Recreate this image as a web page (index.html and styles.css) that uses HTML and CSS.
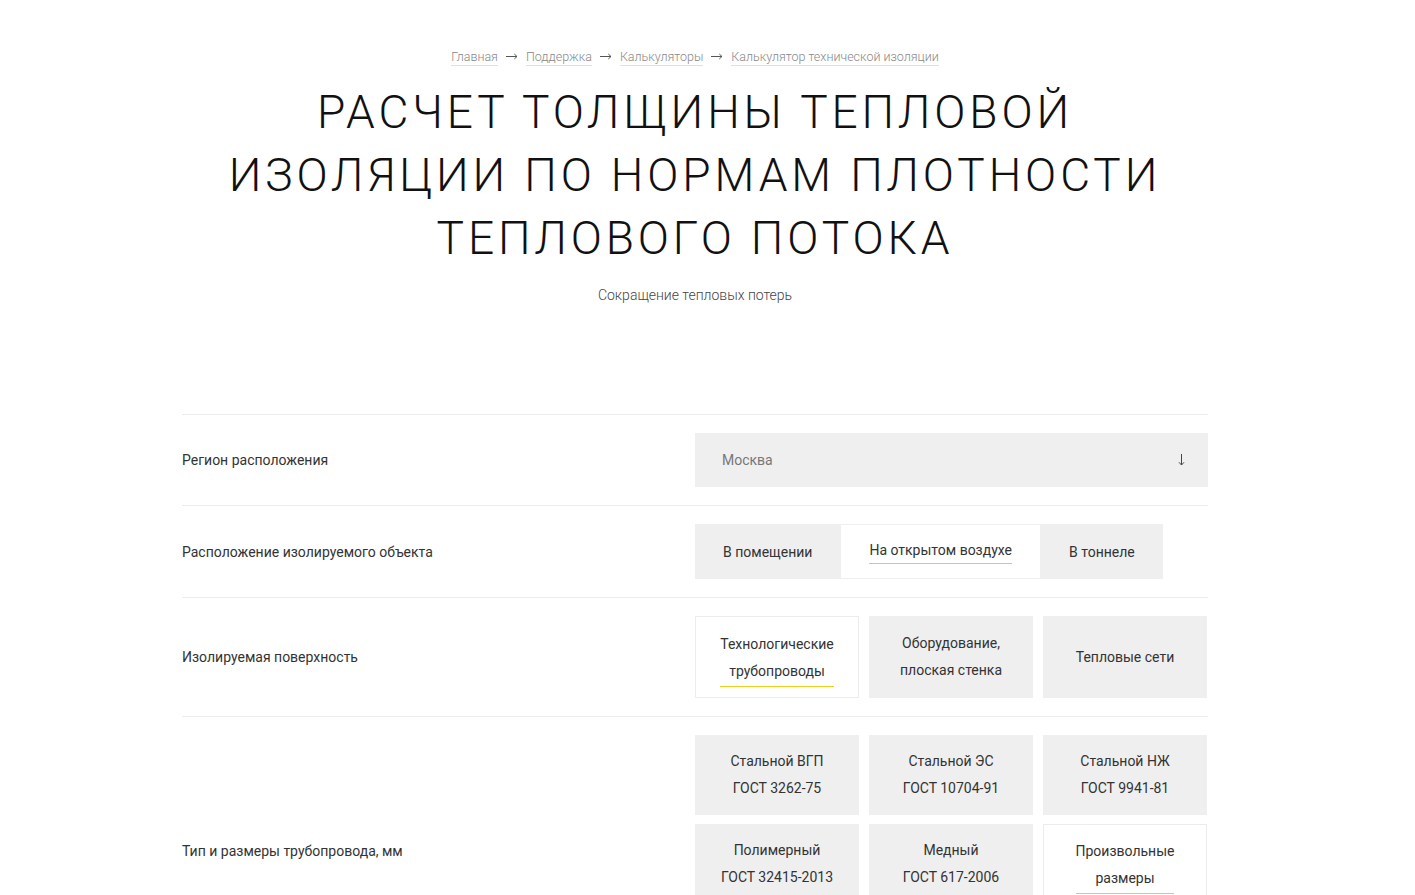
FILE: index.html
```html
<!DOCTYPE html>
<html lang="ru">
<head>
<meta charset="utf-8">
<title>Расчет толщины тепловой изоляции</title>
<link rel="stylesheet" href="styles.css">
</head>
<body>
<div class="page">
  <nav class="crumbs">
    <a href="#">Главная</a><svg class="arr" width="12" height="7" viewBox="0 0 12 7"><path d="M0 3.5H11M8.3 1L11 3.5L8.3 6" fill="none" stroke="#555" stroke-width="1"/></svg><a href="#">Поддержка</a><svg class="arr" width="12" height="7" viewBox="0 0 12 7"><path d="M0 3.5H11M8.3 1L11 3.5L8.3 6" fill="none" stroke="#555" stroke-width="1"/></svg><a href="#">Калькуляторы</a><svg class="arr" width="12" height="7" viewBox="0 0 12 7"><path d="M0 3.5H11M8.3 1L11 3.5L8.3 6" fill="none" stroke="#555" stroke-width="1"/></svg><a href="#">Калькулятор технической изоляции</a>
  </nav>
  <h1 class="title">Расчет толщины тепловой<br>изоляции по нормам плотности<br>теплового потока</h1>
  <p class="subtitle">Сокращение тепловых потерь</p>

  <div class="form">
    <div class="row">
      <div class="label">Регион расположения</div>
      <div class="ctrl">
        <div class="select"><span>Москва</span><svg class="down" width="7" height="12" viewBox="0 0 7 12"><path d="M3.5 0V11M1 8.3L3.5 11L6 8.3" fill="none" stroke="#444" stroke-width="1"/></svg></div>
      </div>
    </div>
    <div class="row">
      <div class="label">Расположение изолируемого объекта</div>
      <div class="ctrl">
        <div class="seg">
          <div class="segbtn">В помещении</div>
          <div class="segbtn active"><span class="ul">На открытом воздухе</span></div>
          <div class="segbtn">В тоннеле</div>
        </div>
      </div>
    </div>
    <div class="row">
      <div class="label">Изолируемая поверхность</div>
      <div class="ctrl">
        <div class="cards tall">
          <div class="card active"><span class="ul">Технологические<br>трубопроводы</span></div>
          <div class="card">Оборудование,<br>плоская стенка</div>
          <div class="card">Тепловые сети</div>
        </div>
      </div>
    </div>
    <div class="row">
      <div class="label">Тип и размеры трубопровода, мм</div>
      <div class="ctrl stack">
        <div class="cards">
          <div class="card">Стальной ВГП<br>ГОСТ 3262-75</div>
          <div class="card">Стальной ЭС<br>ГОСТ 10704-91</div>
          <div class="card">Стальной НЖ<br>ГОСТ 9941-81</div>
          <div class="card">Полимерный<br>ГОСТ 32415-2013</div>
          <div class="card">Медный<br>ГОСТ 617-2006</div>
          <div class="card active"><span class="ul">Произвольные<br>размеры</span></div>
        </div>
        <div class="field">Наружный диаметр, мм</div>
      </div>
    </div>
  </div>
</div>
</body>
</html>
```

FILE: styles.css
```css
html, body {
  margin: 0;
  padding: 0;
  background: #fff;
}
body {
  font-family: Roboto, "Liberation Sans", Arial, sans-serif;
  color: #222;
}
.page {
  width: 1390px;
  padding-top: 47px;
}
.crumbs {
  text-align: center;
  font-size: 12.5px;
  line-height: 20px;
  font-weight: 300;
}
.crumbs a {
  color: #888;
  text-decoration: none;
  border-bottom: 1px solid #f3e49a;
  padding-bottom: 1px;
}
.crumbs .arr {
  margin: 0 8px;
  vertical-align: 1px;
}
.title {
  margin: 14px 0 0;
  text-align: center;
  font-weight: 300;
  font-size: 46px;
  line-height: 63px;
  letter-spacing: 3.9px;
  text-transform: uppercase;
  color: #111;
}
.subtitle {
  margin: 15px 0 0;
  text-align: center;
  font-size: 14px;
  line-height: 20px;
  font-weight: 300;
  color: #444;
}
.form {
  width: 1026px;
  margin: 109px auto 0;
}
.row {
  display: grid;
  grid-template-columns: 513px 513px;
  align-items: center;
  border-top: 1px solid #ececec;
  padding: 18px 0;
}
.label {
  font-size: 14px;
  color: #333;
}
.select {
  display: flex;
  justify-content: space-between;
  align-items: center;
  height: 54px;
  padding: 0 23px 0 27px;
  background: #efefef;
  font-size: 14px;
  color: #777;
}
.seg {
  display: flex;
}
.segbtn {
  height: 55px;
  padding: 0 28px;
  display: flex;
  align-items: center;
  background: #efefef;
  font-size: 14px;
  color: #333;
}
.segbtn.active {
  background: #fff;
  border: 1px solid #efefef;
  box-sizing: border-box;
}
.segbtn .ul {
  display: inline-block;
  border-bottom: 1px solid #f0cf1c;
  padding: 0 0 5px;
  margin-top: 3px;
}
.stack {
  display: flex;
  flex-direction: column;
  gap: 9px;
}
.cards {
  display: grid;
  grid-template-columns: repeat(3, 164px);
  gap: 9px 10px;
}
.card {
  height: 80px;
  box-sizing: border-box;
  display: flex;
  align-items: center;
  justify-content: center;
  text-align: center;
  background: #efefef;
  font-size: 14px;
  line-height: 27px;
  color: #333;
}
.cards.tall .card {
  height: 82px;
}
.card.active {
  background: #fff;
  border: 1px solid #ececec;
}
.card .ul {
  display: inline-block;
  border-bottom: 1px solid #f0cf1c;
  padding-bottom: 1px;
  margin-top: 4px;
}
.field {
  height: 54px;
  display: flex;
  align-items: center;
  padding: 0 27px;
  background: #efefef;
  font-size: 14px;
  color: #777;
}
```
